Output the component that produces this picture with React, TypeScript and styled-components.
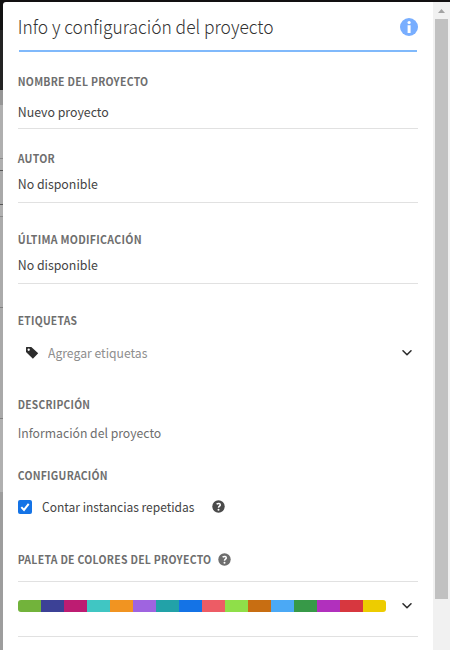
import React from "react";
import styled, { createGlobalStyle } from "styled-components";

const Global = createGlobalStyle`
  *, *::before, *::after { box-sizing: border-box; }
  html, body { margin: 0; height: 650px; overflow: hidden; }
  body { background: #121212; font-family: "Noto Sans CJK SC", "Open Sans", sans-serif; color: #4b4b4b; }
`;

const Window = styled.div`
  display: flex;
  width: 450px;
  height: 650px;
  padding-top: 2px;
  overflow: hidden;
  background: #121011;
`;

const Backdrop = styled.div`
  display: flex;
  flex-direction: column;
  flex: none;
  width: 3px;
  height: 650px;
  margin-top: -2px;
`;

const Strip = styled.div<{ $h: number; $c: string }>`
  flex: none;
  height: ${(p) => p.$h}px;
  background: ${(p) => p.$c};
`;

const Panel = styled.main`
  width: 430px;
  height: 648px;
  padding: 0 15px;
  border-top-left-radius: 3px;
  background: #fff;
  overflow: hidden;
`;

const Header = styled.header`
  display: flex;
  align-items: center;
  justify-content: space-between;
  height: 50px;
  margin-left: 1px;
  border-bottom: 2px solid #80b9fb;
  width: 398px;
`;

const Title = styled.h1`
  margin: 0 0 0 -1px;
  font-size: 19px;
  line-height: 50px;
  font-weight: 300;
  white-space: nowrap;
  color: #323232;
  transform: translateX(-0.3px) scaleX(0.916);
  transform-origin: left;
`;

const InfoIcon = styled.svg`
  flex: none;
  margin: 2px -1px 0 0;
`;

const Section = styled.section<{ $h: number; $pad: number; $line?: boolean }>`
  height: ${(p) => p.$h}px;
  padding-top: ${(p) => p.$pad}px;
  border-bottom: ${(p) => (p.$line ? "1px solid #e1e1e1" : "none")};
`;

const Label = styled.h2`
  display: flex;
  align-items: center;
  height: 16px;
  margin: 0;
  font-size: 11px;
  line-height: 16px;
  font-weight: 700;
  letter-spacing: 0.3px;
  white-space: nowrap;
  color: #6e6e6e;
`;

const LabelText = styled.span<{ $w?: number }>`
  width: ${(p) => (p.$w ? `${p.$w}px` : "max-content")};
`;

const LabelInk = styled.span<{ $squeeze: number }>`
  display: block;
  width: max-content;
  transform: translate(-0.3px, -1px) scaleX(${(p) => p.$squeeze});
  transform-origin: left;
`;

const Value = styled.div<{ $gap: number; $squeeze?: number; $muted?: boolean }>`
  width: max-content;
  height: 20px;
  margin-top: ${(p) => p.$gap}px;
  font-size: 13px;
  line-height: 20px;
  white-space: nowrap;
  color: ${(p) => (p.$muted ? "#6e6e6e" : "#444")};
  transform: translateX(-0.3px) scaleX(${(p) => p.$squeeze ?? 0.95});
  transform-origin: left;
`;

const TagRow = styled.div`
  display: flex;
  align-items: center;
  height: 20px;
  margin-top: 14px;
  padding: 0 5px 0 7px;
`;

const Placeholder = styled.span`
  flex: 1;
  margin-left: 9px;
  font-size: 13px;
  line-height: 20px;
  color: #8e8e8e;
  transform: scaleX(0.937);
  transform-origin: left;
`;

const CheckRow = styled.label`
  display: flex;
  align-items: center;
  height: 20px;
  margin-top: 13px;
`;

const Box = styled.span`
  display: grid;
  place-items: center;
  width: 14px;
  height: 14px;
  border-radius: 2px;
  background: #1473e6;
`;

const CheckText = styled.span`
  width: 170px;
  margin-left: 9.5px;
  margin-right: 0.5px;
  font-size: 13px;
  line-height: 20px;
  white-space: nowrap;
  color: #444;
  transform: scaleX(0.925);
  transform-origin: left;
`;

const HelpIcon = styled.svg`
  flex: none;
  margin-bottom: 2px;
`;

const PaletteRow = styled.div`
  display: flex;
  align-items: center;
  justify-content: space-between;
  height: 56px;
  padding: 0 5px 6px 0;
  border-top: 1px solid #e1e1e1;
  border-bottom: 1px solid #e1e1e1;
`;

const Swatches = styled.div`
  display: flex;
  height: 12px;
  border-radius: 3px;
  overflow: hidden;
`;

const Swatch = styled.span<{ $c: string }>`
  width: 23px;
  background: ${(p) => p.$c};
`;

const Scrollbar = styled.aside`
  flex: none;
  width: 17px;
  height: 648px;
  padding: 0 2px;
  background: #f1f1f1;
`;

const ArrowUp = styled.svg`
  display: block;
  width: 13px;
  height: 17px;
`;

const Thumb = styled.div`
  height: 580px;
  background: #c1c1c1;
`;

const strips: [number, string][] = [
  [30, "#111"], [60, "#232323"], [15, "#969696"], [53, "#afafaf"],
  [1, "#8a8a8a"], [11, "#afafaf"], [1, "#555"], [33, "#a9a9a9"],
  [1, "#555"], [11, "#afafaf"], [1, "#8a8a8a"], [90, "#ababab"],
  [1, "#808080"], [110, "#a9a9a9"], [1, "#808080"], [73, "#b0b0b0"],
  [158, "#9d9d9d"],
];

const palette = [
  "#72b33b", "#3c4196", "#bd1c72", "#40c6c3", "#f19421", "#9f64e0", "#22a2a8", "#1473e6",
  "#ed5c65", "#8fdf49", "#c86e12", "#4ba9f5", "#379948", "#b130bd", "#d7373f", "#edcc00",
];

const Heading = ({ text, squeeze, width, help }: { text: string; squeeze: number; width?: number; help?: boolean }) => (
  <Label>
    <LabelText $w={width}><LabelInk $squeeze={squeeze}>{text}</LabelInk></LabelText>
    {help && <Help color="#6e6e6e" />}
  </Label>
);

const Help = ({ color }: { color: string }) => (
  <HelpIcon width="13" height="13" viewBox="0 0 13 13">
    <circle cx="6.5" cy="6.5" r="6.2" fill={color} />
    <path d="M4.6 4.1C6.2 2.9 8.4 3.3 8.3 4.9C8.2 6.1 6.5 6.2 6.5 7.7" fill="none" stroke="#fff" strokeWidth="1.5" />
    <circle cx="6.5" cy="9.7" r="1" fill="#fff" />
  </HelpIcon>
);

const Chevron = () => (
  <svg width="12" height="8" viewBox="0 0 12 8">
    <path d="M2 1.8L6 5.7L10 1.8" fill="none" stroke="#2c2c2c" strokeWidth="1.6" strokeLinecap="round" strokeLinejoin="round" />
  </svg>
);

export default function App() {
  return (
    <>
      <Global />
      <Window>
        <Backdrop>
          {strips.map(([h, c], i) => <Strip key={i} $h={h} $c={c} />)}
        </Backdrop>
        <Panel>
          <Header>
            <Title>Info y configuración del proyecto</Title>
            <InfoIcon width="18" height="18" viewBox="0 0 18 18">
              <circle cx="9" cy="9" r="9" fill="#78aeff" />
              <circle cx="9.1" cy="4.5" r="1.6" fill="#fff" />
              <path d="M7.6 7.3H10.6V15H7.6Z" fill="#fff" />
            </InfoIcon>
          </Header>
          <Section $h={77} $pad={22} $line>
            <Heading text="NOMBRE DEL PROYECTO" squeeze={0.949} />
            <Value $gap={12}>Nuevo proyecto</Value>
          </Section>
          <Section $h={74} $pad={22} $line>
            <Heading text="AUTOR" squeeze={0.955} />
            <Value $gap={7}>No disponible</Value>
          </Section>
          <Section $h={81} $pad={29} $line>
            <Heading text="ÚLTIMA MODIFICACIÓN" squeeze={0.96} />
            <Value $gap={7}>No disponible</Value>
          </Section>
          <Section $h={113} $pad={29}>
            <Heading text="ETIQUETAS" squeeze={0.935} />
            <TagRow>
              <svg width="14" height="14" viewBox="0 0 14 14">
                <path fillRule="evenodd" d="M1.4 1H6.3L13.2 7.3L7.9 12.8L1 6V1.4ZM3.7 2.6A1.15 1.15 0 1 0 3.7 4.9A1.15 1.15 0 1 0 3.7 2.6Z" fill="#2c2c2c" />
              </svg>
              <Placeholder>Agregar etiquetas</Placeholder>
              <Chevron />
            </TagRow>
          </Section>
          <Section $h={71} $pad={0}>
            <Heading text="DESCRIPCIÓN" squeeze={0.93} />
            <Value $gap={10} $squeeze={0.94} $muted>Información del proyecto</Value>
          </Section>
          <Section $h={84} $pad={0}>
            <Heading text="CONFIGURACIÓN" squeeze={0.945} />
            <CheckRow>
              <Box>
                <svg width="14" height="14" viewBox="0 0 14 14">
                  <path d="M3.3 7.1L6 9.9L10.7 3.9" fill="none" stroke="#fff" strokeWidth="2" />
                </svg>
              </Box>
              <CheckText>Contar instancias repetidas</CheckText>
              <Help color="#4b4b4b" />
            </CheckRow>
          </Section>
          <Section $h={29} $pad={0}>
            <Heading text="PALETA DE COLORES DEL PROYECTO" squeeze={0.95} width={200} help />
          </Section>
          <PaletteRow>
            <Swatches>{palette.map((c) => <Swatch key={c} $c={c} />)}</Swatches>
            <Chevron />
          </PaletteRow>
        </Panel>
        <Scrollbar>
          <ArrowUp viewBox="0 0 13 17"><path d="M3 11L6.5 7L10 11Z" fill="#a3a3a3" /></ArrowUp>
          <Thumb />
        </Scrollbar>
      </Window>
    </>
  );
}
